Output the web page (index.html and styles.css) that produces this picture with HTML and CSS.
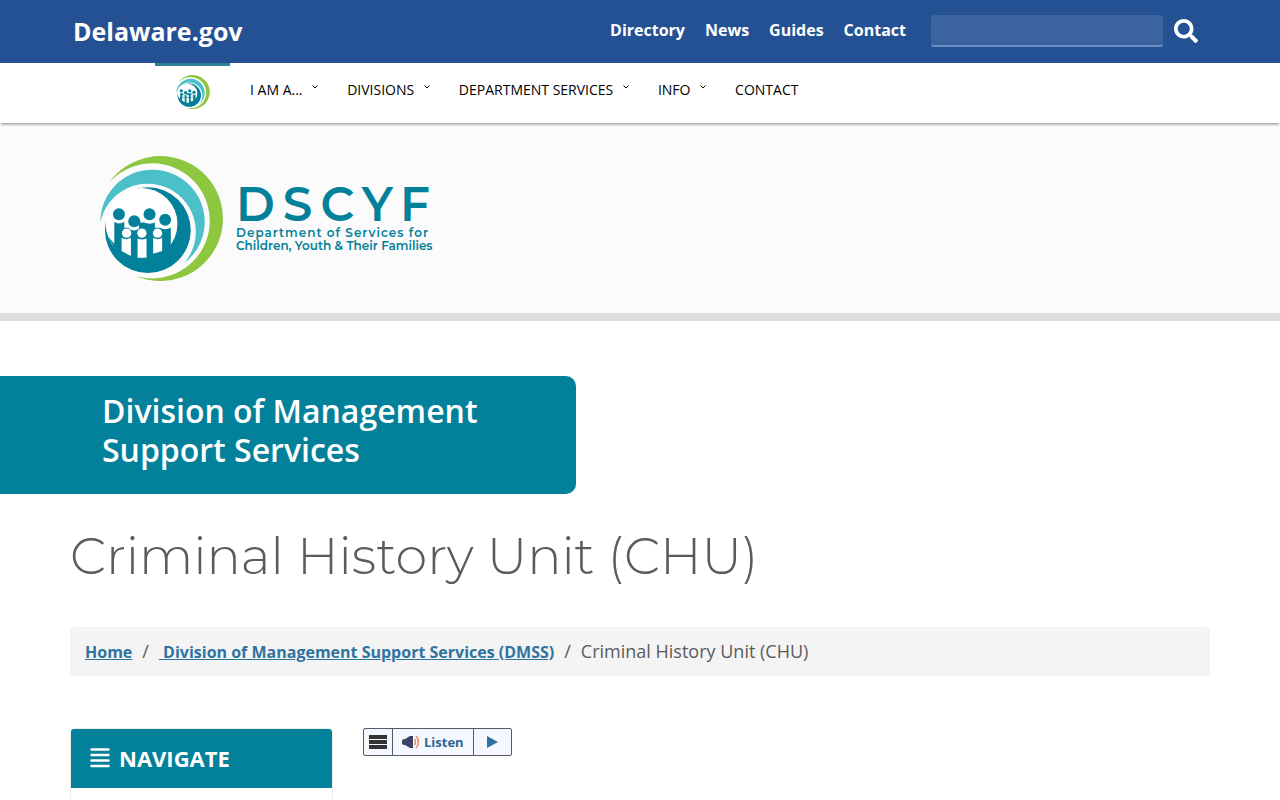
FILE: index.html
```html
<!DOCTYPE html>
<html lang="en">
<head>
    <meta charset="UTF-8">
    <meta name="viewport" content="width=device-width, initial-scale=1.0">
    <title>Criminal History Unit (CHU) - Delaware.gov</title>
    <link rel="stylesheet" href="styles.css">
</head>
<body>

    <!-- Logo mark, used in the menu and in the banner -->
    <svg class="sprite" aria-hidden="true">
        <symbol id="mark" viewBox="30 32 370 376">
            <path fill="#8dc63f" d="M58 112A188 188 0 1 1 138 393A173 173 0 1 0 58 112Z"/>
            <path fill="#4bc0c8" d="M31 232A157 157 0 1 1 283 355A145 145 0 1 0 31 232Z"/>
            <circle fill="#03819a" cx="174" cy="255" r="129"/>
            <circle fill="#fff" cx="155" cy="236" r="108"/>
            <g fill="#03819a">
                <path d="M50 270L73 296V230Q87 240 103 230V248H117V251Q133 261 147 251V232H162Q179 239 195 232V248H210Q226 257 243 248V300L250 320L200 350H100Z"/>
                <circle cx="87" cy="207" r="18"/>
                <circle cx="133" cy="228" r="18"/>
                <circle cx="179" cy="207" r="18"/>
                <circle cx="226" cy="224" r="18"/>
            </g>
            <g fill="#fff">
                <circle cx="110" cy="264" r="14"/>
                <circle cx="156" cy="264" r="14"/>
                <circle cx="203" cy="264" r="14"/>
                <path d="M95 278Q109 287 123 278V333L95 318ZM143 280Q156 287 170 280V338H143ZM190 278Q203 287 217 278V318L190 326Z"/>
            </g>
        </symbol>
    </svg>

    <header class="topbar">
        <a class="brand" href="#">Delaware.gov</a>
        <nav class="top-links">
            <a href="#">Directory</a>
            <a href="#">News</a>
            <a href="#">Guides</a>
            <a href="#">Contact</a>
        </nav>
        <form class="search">
            <input type="text" aria-label="Search">
            <button type="button" aria-label="Submit search">
                <svg viewBox="0 0 512 512" width="24" height="24"><path fill="#fff" d="M505 442.700L405.300 343c-4.500-4.500-10.600-7-17-7H372c27.600-35.300 44-79.700 44-128C416 93.100 322.900 0 208 0S0 93.100 0 208s93.100 208 208 208c48.300 0 92.700-16.400 128-44v16.300c0 6.400 2.500 12.500 7 17l99.700 99.700c9.400 9.400 24.600 9.400 33.900 0l28.300-28.300c9.400-9.400 9.400-24.600.1-34zM208 336c-70.700 0-128-57.200-128-128 0-70.700 57.200-128 128-128 70.700 0 128 57.200 128 128 0 70.700-57.200 128-128 128z"/></svg>
            </button>
        </form>
    </header>

    <nav class="menu">
        <a class="menu-home" href="#" aria-label="Home"><svg width="34" height="34"><use href="#mark"/></svg></a>
        <a href="#">I AM A... <svg class="caret" viewBox="0 0 6 4"><path d="M0.500 0.500L3 3L5.500 0.500"/></svg></a>
        <a href="#">DIVISIONS <svg class="caret" viewBox="0 0 6 4"><path d="M0.500 0.500L3 3L5.500 0.500"/></svg></a>
        <a href="#">DEPARTMENT SERVICES <svg class="caret" viewBox="0 0 6 4"><path d="M0.500 0.500L3 3L5.500 0.500"/></svg></a>
        <a href="#">INFO <svg class="caret" viewBox="0 0 6 4"><path d="M0.500 0.500L3 3L5.500 0.500"/></svg></a>
        <a href="#">CONTACT</a>
    </nav>

    <div class="banner">
        <svg width="123" height="125"><use href="#mark"/></svg>
        <div class="wordmark">
            <div class="initials">DSCYF</div>
            <div class="dept spaced">Department of Services for</div>
            <div class="dept">Children, Youth &amp; Their Families</div>
        </div>
    </div>

    <div class="division">Division of Management Support Services</div>

    <main class="container">
        <h1>Criminal History Unit (CHU)</h1>

        <ol class="breadcrumb">
            <li><a href="#">Home</a></li>
            <li><a href="#">&nbsp;Division of Management Support Services (DMSS)</a></li>
            <li>Criminal History Unit (CHU)</li>
        </ol>

        <div class="columns">
            <aside class="sidebar">
                <h2>
                    <svg width="20" height="20" viewBox="0 0 20 20"><path stroke="#fff" stroke-width="2.500" stroke-linecap="round" d="M1.500 1.500H18.500M1.500 7H18.500M1.500 12.500H18.500M1.500 18H18.500"/></svg>
                    NAVIGATE
                </h2>
            </aside>
            <div class="listen">
                <button type="button" aria-label="Menu"><svg width="18" height="14" viewBox="0 0 18 14"><path fill="#333" d="M0 0H18V4H0ZM0 5H18V9H0ZM0 10H18V14H0Z"/></svg></button>
                <button type="button" class="listen-main">
                    <svg width="18" height="14" viewBox="0 0 18 14"><path fill="#3c4265" d="M0 6Q0 4 3 4L8 1H11V13H8L3 10Q0 10 0 8Z"/><path fill="none" stroke="#f0895f" stroke-width="1.500" d="M12.500 4Q14.500 7 12.500 10M14 1Q19 7 14 13"/></svg>
                    Listen
                </button>
                <button type="button" class="play" aria-label="Play"><svg width="11" height="12" viewBox="0 0 11 12"><path fill="#2f73a0" d="M0 0L11 6L0 12Z"/></svg></button>
            </div>
        </div>
    </main>

</body>
</html>
```

FILE: styles.css
```css
* {
    box-sizing: border-box;
}

body {
    margin: 0;
    font-family: "Open Sans", "Noto Sans", sans-serif;
    color: #5b5b5b;
    background: #fff;
}

a {
    text-decoration: none;
}

button {
    font-family: inherit;
    cursor: pointer;
}

.sprite {
    position: absolute;
    width: 0;
    height: 0;
}

/* Top bar */
.topbar {
    display: flex;
    align-items: center;
    height: 63px;
    padding: 0 82px 2px 73px;
    background: #245193;
}

.topbar a {
    color: #fff;
    font-weight: 700;
}

.brand {
    font-size: 25px;
}

.top-links {
    display: flex;
    gap: 20px;
    margin-left: auto;
    margin-right: 25px;
    padding-bottom: 2px;
    font-size: 16px;
}

.search {
    display: flex;
    align-items: center;
    gap: 11px;
}

.search input {
    width: 232px;
    height: 32px;
    padding: 4px 8px;
    border: 0;
    border-bottom: 2px solid #6c8fc4;
    border-radius: 3px;
    background: #3c639f;
    color: #fff;
    font-size: 16px;
}

.search button {
    display: flex;
    padding: 0;
    border: 0;
    background: none;
}

/* Main menu */
.menu {
    position: relative;
    display: flex;
    gap: 29px;
    height: 60px;
    padding-left: 155px;
    background: #fff;
    box-shadow: 0 3px 2px -1px rgba(0, 0, 0, 0.3);
    line-height: 54px;
}

.menu a {
    color: #000;
    font-size: 14px;
}

.menu .menu-home {
    width: 75px;
    margin-right: -9px;
    padding: 9px 0 0 21px;
    border-top: 3px solid #31809a;
    line-height: 0;
}

.caret {
    width: 6px;
    height: 4px;
    margin: 0 0 8px 6px;
    fill: none;
    stroke: #000;
    vertical-align: middle;
}

/* Department banner */
.banner {
    display: flex;
    gap: 13px;
    padding: 33px 100px 32px;
    border-bottom: 8px solid #ddd;
    background: #fbfbfb;
}

.wordmark {
    padding-top: 27px;
    color: #03819a;
    font-family: Montserrat, Lato, sans-serif;
    font-weight: 600;
}

.initials {
    font-size: 47px;
    line-height: 43px;
    letter-spacing: 8px;
}

.dept {
    font-size: 12px;
    line-height: 13px;
}

.spaced {
    letter-spacing: 1px;
}

.division {
    width: 45%;
    margin-top: 55px;
    padding: 15px 90px 25px 102px;
    border-radius: 0 10px 10px 0;
    background: #03819a;
    color: #fff;
    font-size: 32px;
    font-weight: 600;
    line-height: 39px;
}

/* Page content */
.container {
    margin: 0 70px;
}

h1 {
    margin: 32px 0 41px;
    font-family: Montserrat, "Open Sans", sans-serif;
    font-size: 51px;
    font-weight: 300;
    line-height: 60px;
}

.breadcrumb {
    display: flex;
    margin: 0 0 52px;
    padding: 12px 15px;
    border-radius: 4px;
    background: #f4f4f4;
    font-size: 18px;
    line-height: 24px;
    list-style: none;
}

.breadcrumb li + li::before {
    content: "/";
    padding: 0 10px;
}

.breadcrumb a {
    color: #2f73a0;
    font-size: 16px;
    font-weight: 700;
    text-decoration: underline;
}

.columns {
    display: flex;
    gap: 30px;
    align-items: flex-start;
}

.sidebar {
    width: 263px;
    height: 90px;
    border: 1px solid #eee;
    border-radius: 4px;
}

.sidebar h2 {
    display: flex;
    align-items: center;
    gap: 9px;
    height: 59px;
    margin: 0;
    padding: 0 19px 2px;
    border-radius: 3px 3px 0 0;
    background: #03819a;
    color: #fff;
    font-size: 22px;
    font-weight: 700;
}

.listen {
    display: flex;
    height: 28px;
    border: 1px solid #555b6a;
    border-radius: 2px;
    background: #f5f9ff;
}

.listen button {
    display: flex;
    align-items: center;
    gap: 4px;
    padding: 0 5px;
    border: 0;
    background: none;
    color: #2f6590;
    font-size: 13px;
    font-weight: 700;
}

.listen button + button {
    border-left: 1px solid #555b6a;
}

.listen .listen-main {
    padding: 0 9px;
}

.listen .play {
    padding: 0 13px;
}
```
